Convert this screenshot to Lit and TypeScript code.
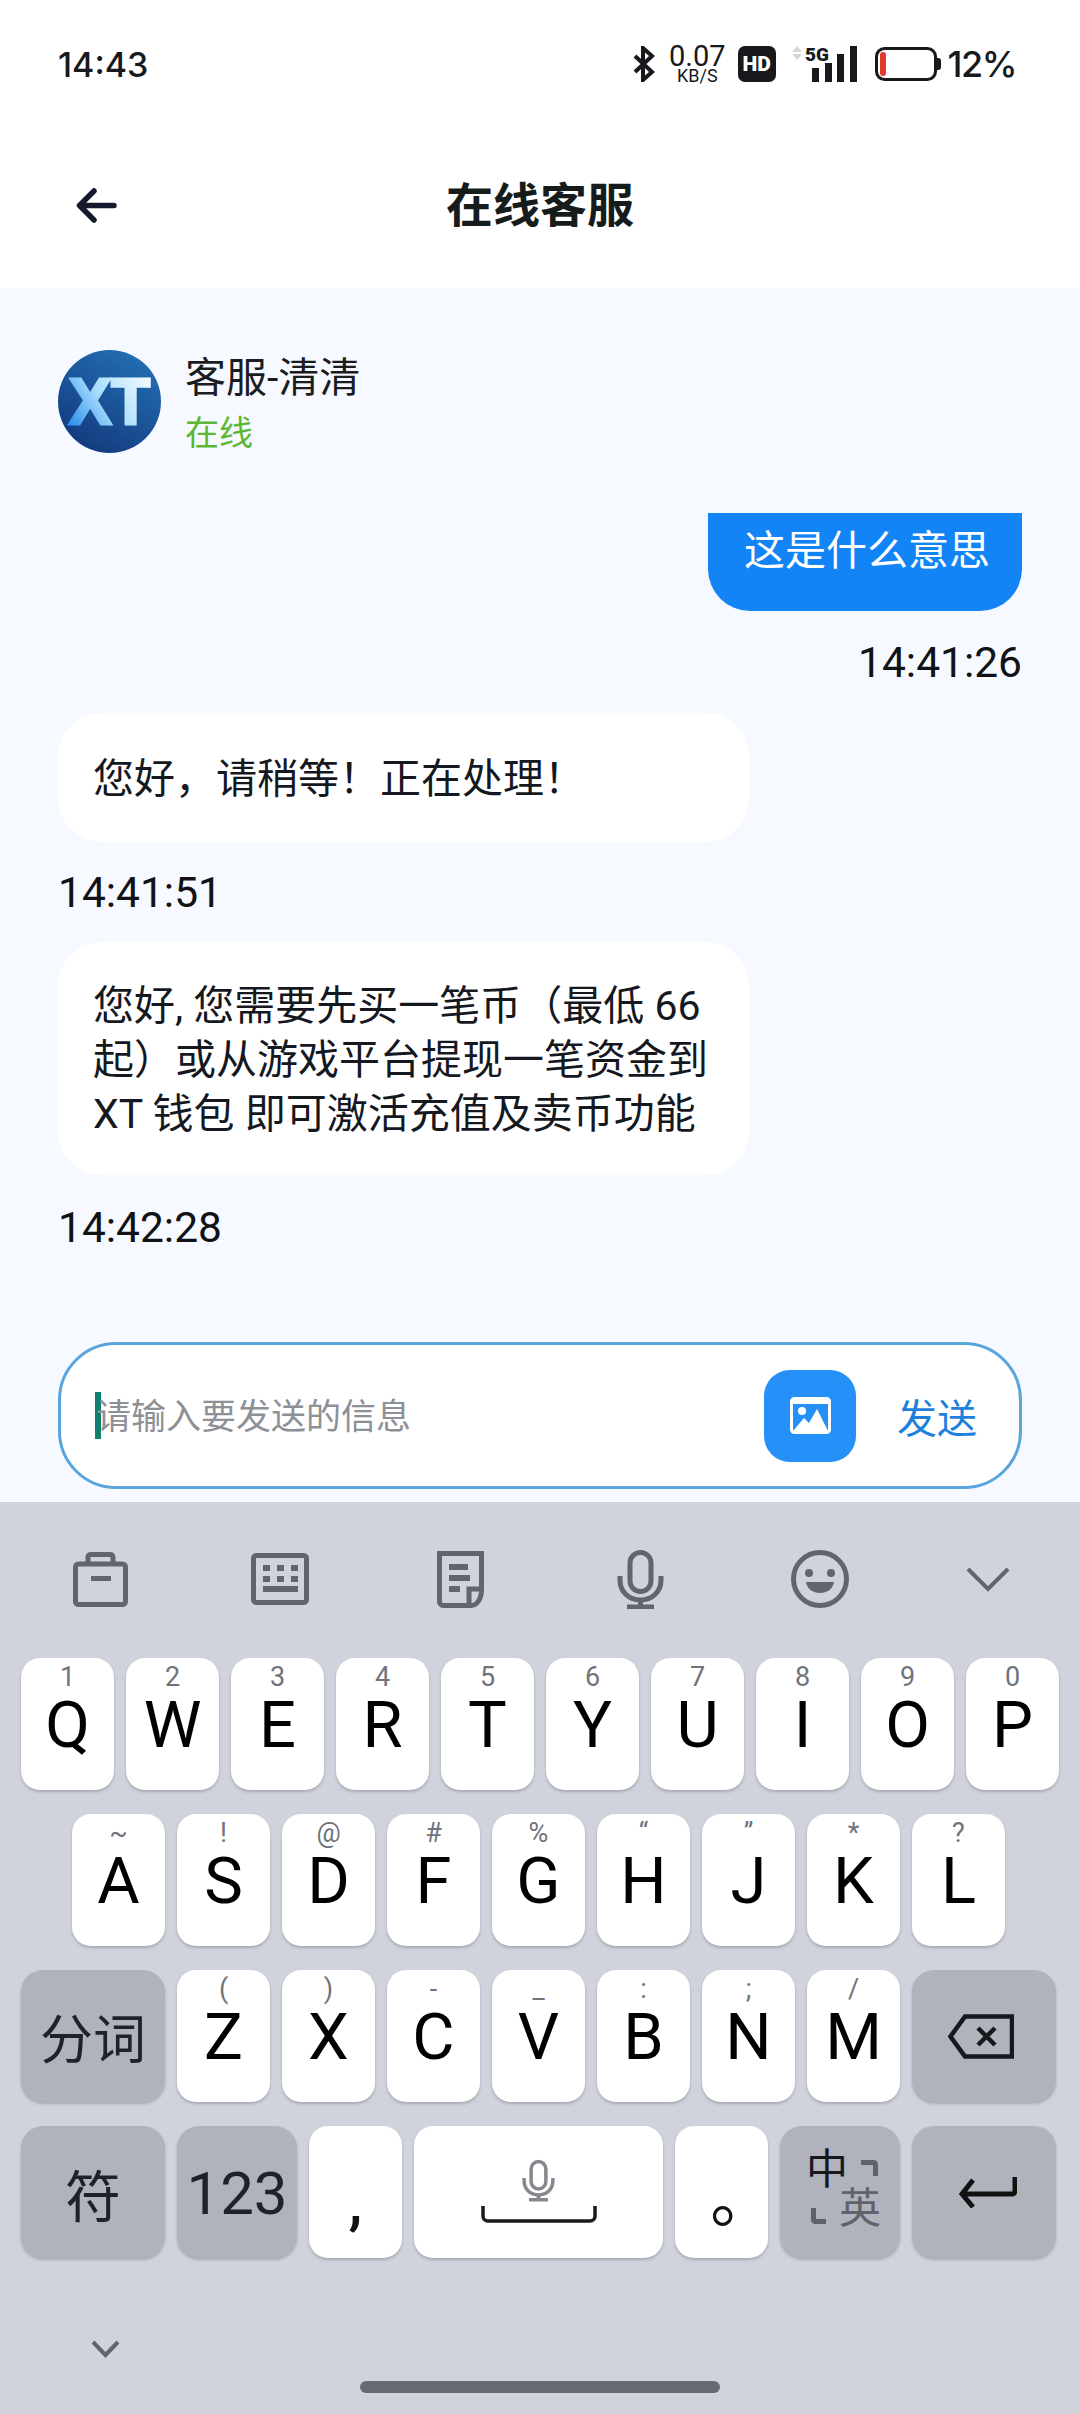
import { LitElement, html, css, svg } from "lit";
import { customElement } from "lit/decorators.js";

interface LetterKey {
    label: string;
    hint: string;
}

const toKeys = (labels: string, hints: string): LetterKey[] =>
    labels.split("").map((label, i) => ({ label, hint: hints[i] }));

const ROW_1 = toKeys("QWERTYUIOP", "1234567890");
const ROW_2 = toKeys("ASDFGHJKL", "~!@#%“”*?");
const ROW_3 = toKeys("ZXCVBNM", "()-_:;/");

const micIcon = (w: number, h: number, color: string) => svg`
  <svg width=${w} height=${h} viewBox="0 0 47 59" fill="none" stroke=${color} stroke-width="5">
    <rect x="13" y="2.5" width="21" height="39" rx="10.5" />
    <path d="M3 26 V30 C3 42 12 50 23.5 50 C35 50 44 42 44 30 V26" />
    <path d="M23.5 50 V57 M10 57 H37" />
  </svg>`;

@customElement("app-root")
export class AppRoot extends LitElement {
    static styles = css`
    :host {
      display: block;
      width: 1080px;
      height: 2414px;
      font-family: Roboto, "Noto Sans CJK SC", sans-serif;
      color: #15181f;
    }

    .page {
      display: flex;
      flex-direction: column;
      height: 100%;
      background: #fff;
    }

    /* status bar */
    .status {
      height: 128px;
      display: flex;
      align-items: center;
      justify-content: space-between;
      padding: 0 64px 0 58px;
      font-family: Inter, Roboto, sans-serif;
      font-weight: 500;
      font-size: 34px;
      color: #17191d;
    }

    .status-right {
      display: flex;
      align-items: center;
    }

    .percent {
      font-size: 36px;
      letter-spacing: -1.5px;
    }

    .speed {
      display: flex;
      flex-direction: column;
      align-items: center;
      font-family: Roboto, sans-serif;
      font-weight: 400;
      font-size: 29px;
      line-height: 21px;
      margin: 0 12px 0 14px;
    }

    .speed small {
      font-size: 18px;
      line-height: 14px;
      margin-top: 2px;
    }

    .hd {
      width: 38px;
      height: 36px;
      border-radius: 7px;
      background: #17191d;
      color: #fff;
      font-family: Roboto, sans-serif;
      font-weight: 900;
      font-size: 21px;
      display: flex;
      align-items: center;
      justify-content: center;
      margin-right: 16px;
    }

    .signal {
      margin: -4px 18px 0 0;
    }

    .battery {
      margin-right: 7px;
    }

    /* header */
    .header {
      height: 160px;
      position: relative;
      display: flex;
      align-items: center;
      justify-content: center;
    }

    .back {
      position: absolute;
      left: 76px;
      top: 60px;
    }

    .title {
      font-size: 47px;
      line-height: 60px;
      font-weight: 700;
      color: #161c1c;
      margin-top: -5px;
    }

    /* chat */
    .chat {
      flex: 1;
      display: flex;
      flex-direction: column;
      background: #f6f9ff;
      padding: 62px 58px 13px;
      min-height: 0;
    }

    .agent {
      display: flex;
      align-items: center;
      gap: 24px;
      height: 103px;
      margin-bottom: 60px;
    }

    .agent-name {
      font-size: 41px;
      line-height: 54px;
      color: #1a1c20;
      margin-top: 3px;
    }

    .agent-state {
      font-size: 34px;
      line-height: 46px;
      color: #5db733;
      margin-top: 5px;
    }

    .bubble {
      font-size: 41px;
      line-height: 54px;
    }

    .bubble.mine {
      align-self: flex-end;
      width: 314px;
      height: 98px;
      box-sizing: border-box;
      padding: 11px 0 0 36px;
      background: #1384f6;
      color: #fff;
      border-radius: 0 0 42px 42px;
    }

    .bubble.theirs {
      width: 691px;
      box-sizing: border-box;
      padding: 39px 35px 36px;
      background: #fff;
      border-radius: 44px;
      color: #15181f;
    }

    .bubble.long {
      padding: 37px 35px 34px;
      margin-top: 1px;
    }

    .time {
      font-size: 42.5px;
      line-height: 48px;
      color: #101216;
      margin: 27px 0 24px;
    }

    .time.right {
      align-self: flex-end;
      margin: 28px 0 26px;
    }

    .time.last {
      margin-top: 29px;
    }

    .composer {
      margin-top: auto;
      height: 147px;
      box-sizing: border-box;
      border: 3px solid #5aa5dc;
      border-radius: 58px;
      background: #fff;
      display: flex;
      align-items: center;
      padding: 0 42px 0 34px;
      width: 964px;
    }

    .caret {
      width: 6px;
      height: 47px;
      background: #0f7f6e;
      margin-right: -5px;
    }

    .placeholder {
      flex: 1;
      font-size: 35px;
      color: #8d9095;
      margin-top: -4px;
    }

    .pic {
      width: 92px;
      height: 92px;
      border-radius: 26px;
      background: #2490f8;
      display: flex;
      align-items: center;
      justify-content: center;
      margin-right: 41px;
    }

    .send {
      font-size: 40px;
      color: #1e7fdc;
    }

    /* keyboard */
    .keyboard {
      height: 912px;
      background: #d0d3db;
      display: flex;
      flex-direction: column;
      position: relative;
    }

    .toolbar {
      height: 156px;
      box-sizing: border-box;
      padding: 0 12px 2px 10px;
      display: grid;
      grid-template-columns: repeat(6, 180px);
      align-items: center;
      justify-items: center;
    }

    .toolbar svg {
      display: block;
    }

    .toolbar .collapse {
      margin-right: 24px;
    }

    .rows {
      display: flex;
      flex-direction: column;
      gap: 24px;
    }

    .row {
      display: flex;
      gap: 12px;
      padding-left: 21px;
    }

    .row.home {
      padding-left: 72px;
    }

    .key {
      position: relative;
      width: 93px;
      height: 132px;
      flex: none;
      border-radius: 19px;
      background: #fff;
      box-shadow: 0 2px 3px rgba(60, 64, 75, 0.28);
      display: flex;
      align-items: center;
      justify-content: center;
      font-size: 65px;
      color: #000;
    }

    .letter {
      line-height: 50px;
      margin-top: 2px;
    }

    .key.fn {
      width: 144px;
      border-radius: 22px;
      background: #b0b3bc;
      color: #1f2229;
      font-size: 53px;
    }

    .key.fn .sign {
      font-size: 56px;
    }

    .key.num {
      width: 120px;
      font-size: 60px;
      padding-top: 3px;
      box-sizing: border-box;
    }

    .key.space {
      width: 249px;
    }

    .key.lang {
      width: 120px;
    }

    .hint {
      position: absolute;
      top: 6px;
      left: 0;
      right: 0;
      text-align: center;
      font-size: 27px;
      line-height: 26px;
      font-weight: 400;
      color: #70737b;
    }

    .comma {
      font-size: 62px;
      font-weight: 500;
      line-height: 60px;
      padding-top: 20px;
      color: #111;
    }

    .period {
      font-family: "Noto Sans CJK TC", sans-serif;
      font-size: 64px;
      line-height: 70px;
      padding: 40px 0 0 2px;
      color: #111;
    }

    .space-inner {
      display: flex;
      flex-direction: column;
      align-items: center;
      gap: 3px;
      margin-top: -4px;
    }

    .space-inner svg {
      display: block;
    }

    .delete {
      margin-right: 6px;
    }

    .enter {
      margin-left: 8px;
    }

    .zh {
      position: absolute;
      left: 26px;
      top: 20px;
      font-size: 42px;
      line-height: 48px;
      color: #17191d;
    }

    .en {
      position: absolute;
      left: 59px;
      top: 59px;
      font-size: 42px;
      line-height: 48px;
      color: #5f626b;
    }

    .tick {
      position: absolute;
      left: 0;
      top: 0;
    }

    .foot {
      position: absolute;
      left: 0;
      right: 0;
      bottom: 21px;
      height: 64px;
    }

    .foot-chevron {
      position: absolute;
      left: 91px;
      top: 11px;
    }

    .home-bar {
      position: absolute;
      left: 360px;
      bottom: 0;
      width: 360px;
      height: 12px;
      border-radius: 6px;
      background: #666a73;
    }
  `;

    private renderStatus() {
        return html`
      <div class="status">
        <span>14:43</span>
        <div class="status-right">
          <svg width="22" height="36" viewBox="0 0 22 36" fill="none" stroke="#17191d" stroke-width="4">
            <path d="M2 10 L19 26 L10 34 V2 L19 10 L2 26" />
          </svg>
          <div class="speed">0.07<small>KB/S</small></div>
          <div class="hd">HD</div>
          <svg class="signal" width="65" height="40" viewBox="0 -4 65 40">
            <path d="M5 0 L10 6 H0 Z M0 8 H10 L5 14 Z" fill="#d5d6d8" />
            <text x="13" y="15" font-family="Roboto" font-weight="900" font-size="19" fill="#17191d">5G</text>
            <rect x="20" y="22" width="7" height="14" fill="#17191d" />
            <rect x="33" y="17" width="7" height="19" fill="#17191d" />
            <rect x="45" y="8" width="7" height="28" fill="#17191d" />
            <rect x="58" y="0" width="7" height="36" fill="#17191d" />
          </svg>
          <svg class="battery" width="66" height="34" viewBox="0 0 66 34">
            <rect x="1.5" y="1.5" width="59" height="31" rx="8" fill="#fff" stroke="#17191d" stroke-width="3" />
            <path d="M62 11 H63 A3 3 0 0 1 66 14 V20 A3 3 0 0 1 63 23 H62 Z" fill="#17191d" />
            <rect x="5" y="5" width="6" height="24" rx="3" fill="#e23b2e" />
          </svg>
          <span class="percent">12%</span>
        </div>
      </div>
    `;
    }

    private renderAvatar() {
        return html`
      <svg width="103" height="103" viewBox="0 0 103 103">
        <defs>
          <linearGradient id="disc" x1="0.8" y1="0" x2="0.2" y2="1">
            <stop offset="0" stop-color="#2370b4" />
            <stop offset="1" stop-color="#13387c" />
          </linearGradient>
          <linearGradient id="logo" x1="0" y1="0.8" x2="1" y2="0.2">
            <stop offset="0" stop-color="#2f8fee" />
            <stop offset="0.45" stop-color="#a6dcfc" />
            <stop offset="1" stop-color="#f2fbff" />
          </linearGradient>
        </defs>
        <circle cx="51.5" cy="51.5" r="51.5" fill="url(#disc)" />
        <text x="11" y="74" font-family="Liberation Sans" font-weight="700" font-size="64"
          textLength="81" lengthAdjust="spacingAndGlyphs" fill="url(#logo)" stroke="url(#logo)" stroke-width="3">XT</text>
      </svg>
    `;
    }

    private renderComposer() {
        return html`
      <div class="composer">
        <div class="caret"></div>
        <div class="placeholder">请输入要发送的信息</div>
        <div class="pic">
          <svg width="41" height="37" viewBox="0 0 41 37">
            <rect x="1.5" y="1.5" width="38" height="34" rx="3" fill="none" stroke="#fff" stroke-width="3" />
            <rect x="1" y="1" width="39" height="6" rx="3" fill="#fff" />
            <circle cx="12" cy="14" r="4" fill="#fff" />
            <path d="M3 34 L14 21 L19 26 L27 12 L38 34 Z" fill="#fff" />
          </svg>
        </div>
        <div class="send">发送</div>
      </div>
    `;
    }

    private renderToolbar() {
        const c = "#62656e";
        return html`
      <div class="toolbar">
        <svg width="55" height="55" viewBox="0 0 55 55" fill="none" stroke=${c} stroke-width="5">
          <rect x="2.5" y="12" width="50" height="40.5" rx="3" />
          <path d="M15 12 V5 A3 3 0 0 1 18 2.5 H37 A3 3 0 0 1 40 5 V12" />
          <rect x="18" y="24" width="20" height="5" fill=${c} stroke="none" />
        </svg>
        <svg width="58" height="52" viewBox="0 0 58 52" fill="none" stroke=${c} stroke-width="5">
          <rect x="2.5" y="2.5" width="53" height="47" rx="3" />
          <g fill=${c} stroke="none">
            <rect x="12" y="12" width="7" height="6" /><rect x="26" y="12" width="7" height="6" /><rect x="40" y="12" width="7" height="6" />
            <rect x="12" y="23" width="7" height="6" /><rect x="26" y="23" width="7" height="6" /><rect x="40" y="23" width="7" height="6" />
            <rect x="12" y="33" width="35" height="6" />
          </g>
        </svg>
        <svg width="47" height="57" viewBox="0 0 47 57" fill="none" stroke=${c} stroke-width="5">
          <path d="M44.5 38 V2.5 H2.5 V50 A4 4 0 0 0 6.5 54.5 H34 C40 54.5 44.5 48 44.5 38 H32 V54" />
          <g fill=${c} stroke="none">
            <rect x="12" y="13" width="19" height="6" />
            <rect x="12" y="24" width="21" height="6" />
            <rect x="12" y="35" width="11" height="6" />
          </g>
        </svg>
        ${micIcon(47, 59, c)}
        <svg width="58" height="58" viewBox="0 0 58 58" fill="none" stroke=${c} stroke-width="5">
          <circle cx="29" cy="29" r="26.5" />
          <g fill=${c} stroke="none">
            <circle cx="18" cy="23" r="4" />
            <circle cx="40" cy="23" r="4" />
            <path d="M15 32 H43 C42 39 36 43 29 43 C22 43 16 39 15 32 Z" />
          </g>
        </svg>
        <svg class="collapse" width="44" height="25" viewBox="0 0 44 25" fill="none" stroke=${c} stroke-width="4">
          <path d="M2 2 L22 22 L42 2" />
        </svg>
      </div>
    `;
    }

    private renderLetter(k: LetterKey) {
        return html`<div class="key"><span class="hint">${k.hint}</span><span class="letter">${k.label}</span></div>`;
    }

    private renderKeys() {
        return html`
      <div class="rows">
        <div class="row">${ROW_1.map((k) => this.renderLetter(k))}</div>
        <div class="row home">${ROW_2.map((k) => this.renderLetter(k))}</div>
        <div class="row">
          <div class="key fn">分词</div>
          ${ROW_3.map((k) => this.renderLetter(k))}
          <div class="key fn">
            <svg class="delete" width="66" height="45" viewBox="0 0 66 45" fill="none" stroke="#17191d" stroke-width="4.5">
              <path d="M64 2.5 H17 L2.5 22.5 L17 42.5 H64 Z" />
              <path d="M30 14 L47 31 M47 14 L30 31" />
            </svg>
          </div>
        </div>
        <div class="row">
          <div class="key fn"><span class="sign">符</span></div>
          <div class="key fn num">123</div>
          <div class="key"><span class="comma">,</span></div>
          <div class="key space">
            <div class="space-inner">
              ${micIcon(33, 45, "#86888e")}
              <svg width="116" height="17" viewBox="0 0 116 17" fill="none" stroke="#17191d" stroke-width="3.5">
                <path d="M2 0 V10 A5 5 0 0 0 7 15 H109 A5 5 0 0 0 114 10 V0" />
              </svg>
            </div>
          </div>
          <div class="key"><span class="period">。</span></div>
          <div class="key fn lang">
            <span class="zh">中</span>
            <span class="en">英</span>
            <svg class="tick" width="120" height="132" viewBox="0 0 120 132" fill="none" stroke="#5f626b" stroke-width="5">
              <path d="M81 36.5 H93 A2 2 0 0 1 95.5 39 V50" />
              <path d="M33.5 82 V93 A2 2 0 0 0 36 95.5 H46" />
            </svg>
          </div>
          <div class="key fn">
            <svg class="enter" width="58" height="31" viewBox="0 0 58 31" fill="none" stroke="#111" stroke-width="5">
              <path d="M56 0 V14 A3 3 0 0 1 53 17 H4 M14 3 L3 17 L14 30" />
            </svg>
          </div>
        </div>
      </div>
    `;
    }

    render() {
        return html`
      <div class="page">
        ${this.renderStatus()}
        <div class="header">
          <svg class="back" width="41" height="35" viewBox="0 0 41 35" fill="none" stroke="#141a2c" stroke-width="5.5" stroke-linecap="round" stroke-linejoin="round">
            <path d="M38 17.5 H4 M18 3 L3.5 17.5 L18 32" />
          </svg>
          <div class="title">在线客服</div>
        </div>
        <div class="chat">
          <div class="agent">
            ${this.renderAvatar()}
            <div>
              <div class="agent-name">客服-清清</div>
              <div class="agent-state">在线</div>
            </div>
          </div>
          <div class="bubble mine">这是什么意思</div>
          <div class="time right">14:41:26</div>
          <div class="bubble theirs">您好，请稍等！正在处理！</div>
          <div class="time">14:41:51</div>
          <div class="bubble theirs long">您好, 您需要先买一笔币（最低 66<br />起）或从游戏平台提现一笔资金到<br />XT 钱包 即可激活充值及卖币功能</div>
          <div class="time last">14:42:28</div>
          ${this.renderComposer()}
        </div>
        <div class="keyboard">
          ${this.renderToolbar()}
          ${this.renderKeys()}
          <div class="foot">
            <svg class="foot-chevron" width="29" height="18" viewBox="0 0 29 18" fill="none" stroke="#62656e" stroke-width="4">
              <path d="M2 2 L14.5 15 L27 2" />
            </svg>
            <div class="home-bar"></div>
          </div>
        </div>
      </div>
    `;
    }
}

declare global {
    interface HTMLElementTagNameMap {
        "app-root": AppRoot;
    }
}
